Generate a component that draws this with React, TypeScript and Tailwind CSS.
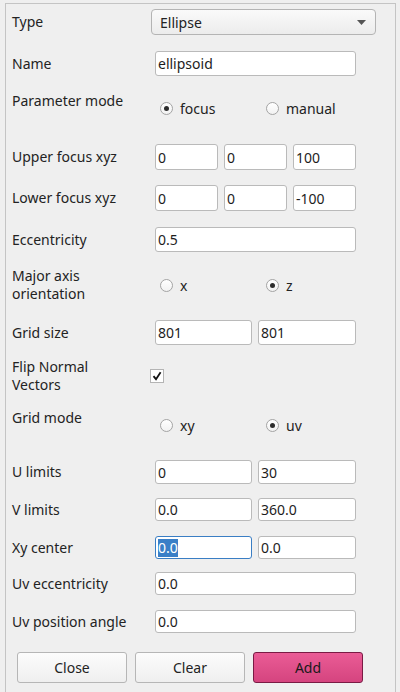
import React from 'react'

const Input = ({ value, width, focused }: { value: string; width: string; focused?: boolean }) => (
  <div
    className={`${width} h-full rounded-[3px] border bg-white pl-[2px] flex items-center text-[14px] text-[#1d1d1d] ${
      focused ? 'border-[#3a7ec4]' : 'border-[#bababa]'
    }`}
  >
    {focused ? <span className="bg-[#3a7fc7] text-white leading-[18px]">{value}</span> : value}
  </div>
)

const Radio = ({ label, checked }: { label: string; checked?: boolean }) => (
  <div className="flex items-center gap-[7px]">
    <div className="w-[13px] h-[13px] rounded-full border border-[#a4a4a4] bg-gradient-to-b from-white to-[#f2f2f2] flex items-center justify-center">
      {checked && <div className="w-[5px] h-[5px] rounded-full bg-[#2d2d2d]" />}
    </div>
    <span>{label}</span>
  </div>
)

const Label = ({ children }: { children: React.ReactNode }) => (
  <div className="w-[149px] shrink-0 pl-[6px] leading-[18px]">{children}</div>
)

export default function App() {
  return (
    <div
      className="w-[400px] h-[692px] overflow-hidden bg-[#efefef] text-[14px] text-[#232323] pt-[3px] pl-[5px]"
      style={{ fontFamily: '"Noto Sans", "DejaVu Sans", sans-serif' }}
    >
      <div className="w-[391px] h-[700px] border border-[#c4c4c4] flex flex-col">
        {/* Type */}
        <div className="flex items-center h-[26px] mt-[5px]">
          <Label>Type</Label>
          <div className="w-[225px] -ml-[4px] h-full rounded-[4px] border border-[#b4b4b4] bg-gradient-to-b from-[#fafafa] to-[#ececec] flex items-center justify-between pl-[8px] pr-[9px]">
            <span>Ellipse</span>
            <svg width="9" height="5" viewBox="0 0 9 5">
              <path d="M0 0 H9 L4.5 5 Z" fill="#555" />
            </svg>
          </div>
        </div>

        {/* Name */}
        <div className="flex items-center h-[25px] mt-[16px]">
          <Label>Name</Label>
          <Input value="ellipsoid" width="w-[201px]" />
        </div>

        {/* Parameter mode */}
        <div className="flex h-[26px] mt-[16px]">
          <Label>Parameter mode</Label>
          <div className="flex items-center pt-[6px] pl-[5px]">
            <div className="w-[106px]">
              <Radio label="focus" checked />
            </div>
            <Radio label="manual" />
          </div>
        </div>

        {/* Upper focus */}
        <div className="flex items-center h-[26px] mt-[26px]">
          <Label>Upper focus xyz</Label>
          <div className="flex gap-[6px] h-full">
            <Input value="0" width="w-[63px]" />
            <Input value="0" width="w-[63px]" />
            <Input value="100" width="w-[63px]" />
          </div>
        </div>

        {/* Lower focus */}
        <div className="flex items-center h-[26px] mt-[15px]">
          <Label>Lower focus xyz</Label>
          <div className="flex gap-[6px] h-full">
            <Input value="0" width="w-[63px]" />
            <Input value="0" width="w-[63px]" />
            <Input value="-100" width="w-[63px]" />
          </div>
        </div>

        {/* Eccentricity */}
        <div className="flex items-center h-[25px] mt-[16px]">
          <Label>Eccentricity</Label>
          <Input value="0.5" width="w-[201px]" />
        </div>

        {/* Major axis */}
        <div className="flex items-center h-[36px] mt-[15px]">
          <Label>
            Major axis
            <br />
            orientation
          </Label>
          <div className="flex items-center pl-[5px]">
            <div className="w-[106px]">
              <Radio label="x" />
            </div>
            <Radio label="z" checked />
          </div>
        </div>

        {/* Grid size */}
        <div className="flex items-center h-[25px] mt-[17px]">
          <Label>Grid size</Label>
          <div className="flex gap-[6px] h-full">
            <Input value="801" width="w-[97px]" />
            <Input value="801" width="w-[98px]" />
          </div>
        </div>

        {/* Flip Normal Vectors */}
        <div className="flex items-center h-[36px] mt-[13px]">
          <Label>
            Flip Normal
            <br />
            Vectors
          </Label>
          <div className="w-[14px] h-[14px] -ml-[5px] border border-[#b4b4b4] bg-white flex items-center justify-center">
            <svg width="10" height="10" viewBox="0 0 10 10">
              <path d="M1.5 5.2 L4 8.2 L8.6 1.3" fill="none" stroke="#111" strokeWidth="1.8" />
            </svg>
          </div>
        </div>

        {/* Grid mode */}
        <div className="flex h-[26px] mt-[15px]">
          <Label>Grid mode</Label>
          <div className="flex items-center pt-[6px] pl-[5px]">
            <div className="w-[106px]">
              <Radio label="xy" />
            </div>
            <Radio label="uv" checked />
          </div>
        </div>

        {/* U limits */}
        <div className="flex items-center h-[24px] mt-[25px]">
          <Label>U limits</Label>
          <div className="flex gap-[6px] h-full">
            <Input value="0" width="w-[97px]" />
            <Input value="30" width="w-[98px]" />
          </div>
        </div>

        {/* V limits */}
        <div className="flex items-center h-[23px] mt-[14px]">
          <Label>V limits</Label>
          <div className="flex gap-[6px] h-full">
            <Input value="0.0" width="w-[97px]" />
            <Input value="360.0" width="w-[98px]" />
          </div>
        </div>

        {/* Xy center */}
        <div className="flex items-center h-[23px] mt-[15px]">
          <Label>Xy center</Label>
          <div className="flex gap-[6px] h-full">
            <Input value="0.0" width="w-[97px]" focused />
            <Input value="0.0" width="w-[98px]" />
          </div>
        </div>

        {/* Uv eccentricity */}
        <div className="flex items-center h-[23px] mt-[13px]">
          <Label>Uv eccentricity</Label>
          <Input value="0.0" width="w-[201px]" />
        </div>

        {/* Uv position angle */}
        <div className="flex items-center h-[23px] mt-[15px]">
          <Label>Uv position angle</Label>
          <Input value="0.0" width="w-[201px]" />
        </div>

        {/* Buttons */}
        <div className="flex gap-[8px] h-[31px] mt-[19px] pl-[11px]">
          <button className="w-[110px] h-full rounded-[3px] border border-[#b6b6b6] bg-gradient-to-b from-[#fcfcfc] to-[#efefef]">
            Close
          </button>
          <button className="w-[110px] h-full rounded-[3px] border border-[#b6b6b6] bg-gradient-to-b from-[#fcfcfc] to-[#efefef]">
            Clear
          </button>
          <button className="w-[110px] h-full rounded-[3px] border border-[#7a1a44] bg-gradient-to-b from-[#ea5c96] to-[#d5447f] text-[#1a1a1a]">
            Add
          </button>
        </div>
      </div>
    </div>
  )
}
